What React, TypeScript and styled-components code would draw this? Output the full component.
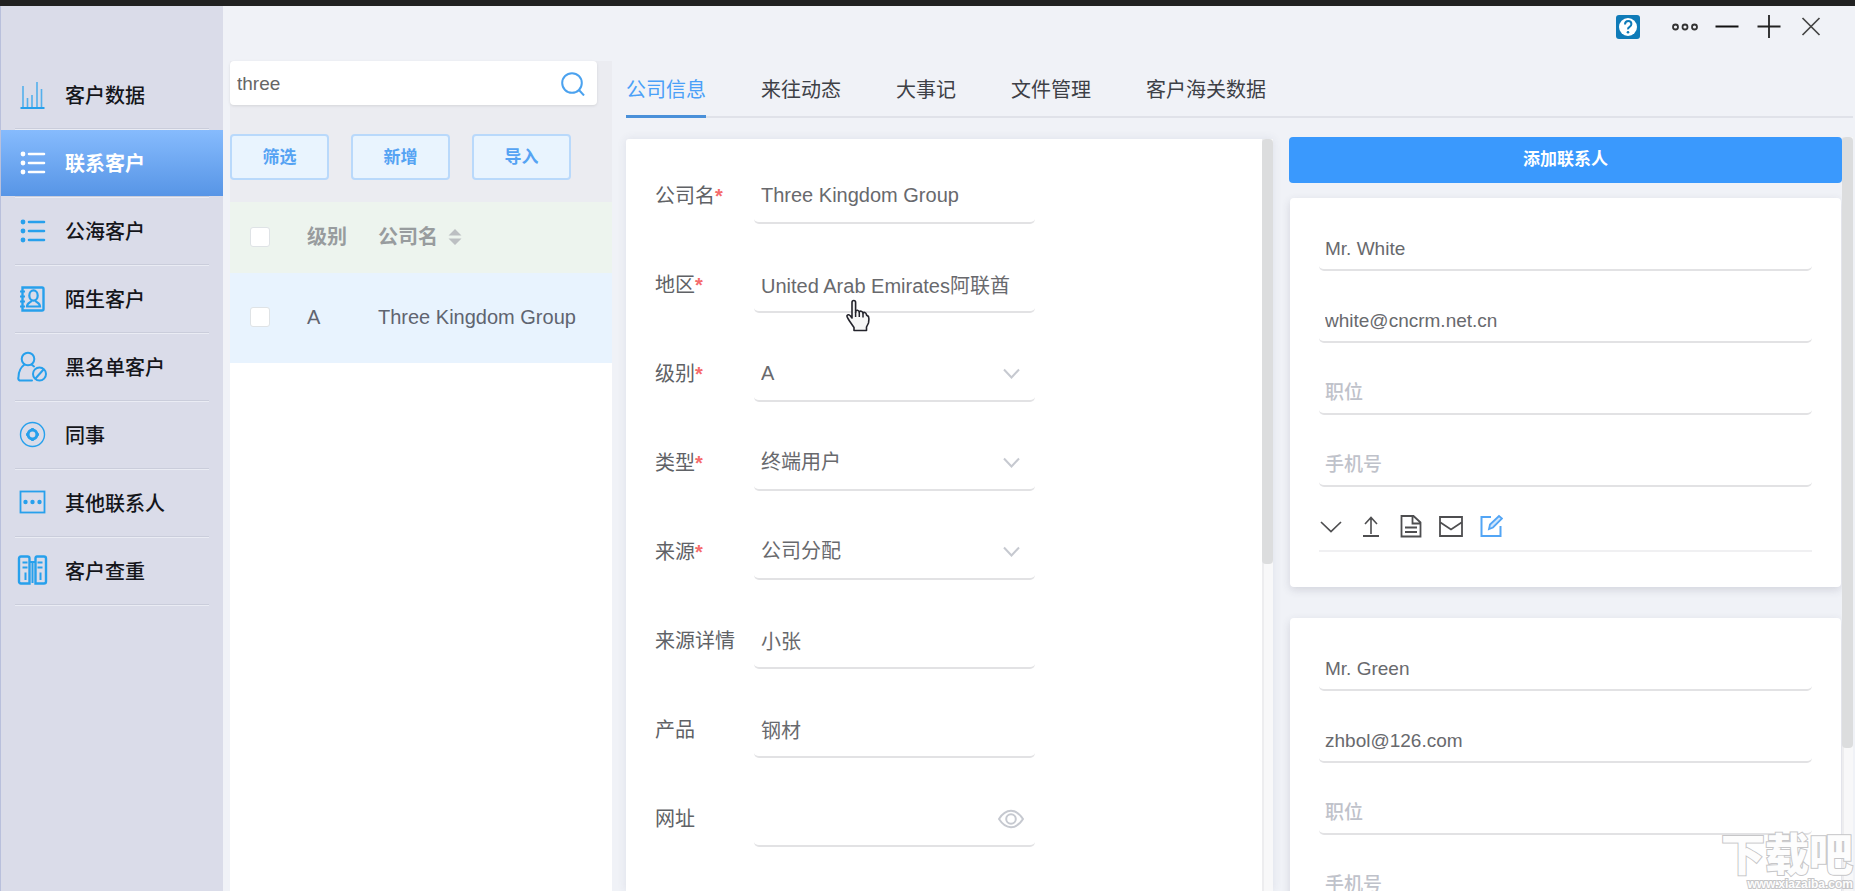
import React from "react";
import styled, { createGlobalStyle, css } from "styled-components";

const GlobalStyle = createGlobalStyle`
  *, *::before, *::after { box-sizing: border-box; }
  html, body { margin: 0; padding: 0; }
  body, input, select, button {
    font-family: "Liberation Sans", "Noto Sans CJK SC", sans-serif;
  }
  body { background: #f0f2f7; overflow: hidden; }
`;

const Page = styled.div`
  display: flex;
  flex-direction: column;
  height: 100vh;
  overflow: hidden;
  position: relative;
`;

const TitleStrip = styled.div`
  flex: none;
  height: 6px;
  background: #212121;
`;

const Shell = styled.div`
  flex: 1;
  min-height: 0;
  display: flex;
`;

/* ---------- Sidebar ---------- */

const Sidebar = styled.nav`
  flex: none;
  width: 223px;
  padding-top: 56px;
  background: #dadce9;
  border-left: 1px solid #b9c0dc;
`;

const NavList = styled.ul`
  list-style: none;
  margin: 0;
  padding: 0;
`;

const NavItem = styled.li`
  &::after {
    content: "";
    display: block;
    height: 2px;
    margin: 0 14px;
    background: linear-gradient(#cacddb 50%, #eaecf4 50%);
  }
`;

const NavLink = styled.a<{ $active?: boolean }>`
  display: flex;
  align-items: center;
  gap: 17px;
  height: 66px;
  padding-left: 15px;
  color: #14151a;
  font-size: 20px;
  font-weight: 500;
  line-height: 28px;
  text-decoration: none;
  ${(p) =>
    p.$active &&
    css`
      color: #fff;
      font-weight: 700;
      background: linear-gradient(#86bbfd, #5795e6);
    `}
`;

const NavIcon = styled.svg`
  flex: none;
  width: 32px;
  height: 32px;
  fill: none;
  stroke: currentColor;
  color: #27a0ec;
  stroke-width: 2;

  ${NavLink}[aria-current] & {
    color: #fff;
  }
`;

const NavLabel = styled.span`
  padding-top: 2px;
`;

/* ---------- Main area ---------- */

const Main = styled.main`
  flex: 1;
  min-width: 0;
  display: flex;
  flex-direction: column;
`;

const WindowBar = styled.header`
  flex: none;
  display: flex;
  justify-content: flex-end;
  align-items: center;
  height: 42px;
  gap: 14px;
  padding-right: 30px;
`;

const WindowButton = styled.button<{ $lead?: boolean }>`
  display: flex;
  padding: 0;
  border: 0;
  background: none;
  margin-right: ${(p) => (p.$lead ? "16px" : "0")};
`;

const Workspace = styled.div`
  flex: 1;
  min-height: 0;
  display: flex;
  gap: 14px;
  padding: 13px 0 0 7px;
`;

/* ---------- Customer list ---------- */

const ListPane = styled.section`
  flex: none;
  width: 382px;
  display: flex;
  flex-direction: column;
  background: #ebecf1;
`;

const SearchBox = styled.div`
  display: flex;
  align-items: center;
  height: 44px;
  width: 367px;
  padding-right: 11px;
  border-radius: 4px;
  background: #fff;
  box-shadow: 0 1px 3px rgba(0, 0, 0, 0.1);
`;

const SearchInput = styled.input`
  flex: 1;
  min-width: 0;
  height: 44px;
  padding: 2px 7px 0;
  border: 0;
  outline: 0;
  background: none;
  color: #666;
  font-size: 19px;
`;

const ButtonRow = styled.div`
  display: flex;
  gap: 22px;
  padding: 29px 0 22px;
`;

const OutlineButton = styled.button`
  width: 99px;
  height: 46px;
  padding: 1px 0 0;
  border: 2px solid #b9d9fb;
  border-radius: 4px;
  background: #e9f4fe;
  color: #55a3f3;
  font-size: 17px;
  font-weight: 700;
  line-height: 24px;
`;

const TableArea = styled.div`
  flex: 1;
  background: #fff;
`;

const Table = styled.table`
  width: 100%;
  border-collapse: collapse;
  table-layout: fixed;
  font-size: 20px;
  line-height: 28px;
`;

const HeadCell = styled.th<{ $w?: number }>`
  width: ${(p) => (p.$w ? `${p.$w}px` : "auto")};
  height: 71px;
  padding: 0 0 2px;
  text-align: left;
  font-weight: 700;
  color: #989c9e;
  background: #edf4ee;
`;

const Cell = styled.td`
  height: 90px;
  padding: 0 0 3px;
  color: #5f6470;
  background: #e8f3fe;
`;

const HeadSort = styled.button`
  display: flex;
  align-items: center;
  gap: 10px;
  padding: 0;
  border: 0;
  background: none;
  color: inherit;
  font: inherit;
`;

const Check = styled.input`
  appearance: none;
  display: block;
  width: 20px;
  height: 20px;
  margin: 0 0 0 20px;
  border: 1px solid #dfe3e6;
  border-radius: 3px;
  background: #fff;
`;

/* ---------- Detail ---------- */

const Detail = styled.section`
  flex: 1;
  min-width: 0;
  display: flex;
  flex-direction: column;
  padding-right: 2px;
`;

const Tabs = styled.div`
  flex: none;
  display: flex;
  gap: 55px;
  height: 57px;
  box-shadow: inset 0 -2px #e0e2e9;
`;

const Tab = styled.button<{ $active?: boolean }>`
  height: 57px;
  padding: 0;
  border: 0;
  border-top: 3px solid transparent;
  border-bottom: 3px solid ${(p) => (p.$active ? "#4a90d9" : "transparent")};
  background: none;
  color: ${(p) => (p.$active ? "#4aa0f8" : "#3d4046")};
  font-size: 20px;
  line-height: 28px;
`;

const Columns = styled.div`
  flex: 1;
  min-height: 0;
  display: flex;
  gap: 16px;
  padding-top: 21px;
`;

const FormPane = styled.div`
  flex: 647;
  min-width: 0;
  display: flex;
  background: #fff;
  border-radius: 3px 0 0 0;
  overflow: hidden;
  box-shadow: 0 0 10px rgba(60, 70, 110, 0.1);
`;

const Form = styled.form`
  flex: 1;
  min-width: 0;
  padding-left: 29px;
`;

const ScrollTrack = styled.div`
  flex: none;
  width: 11px;
  background: #f8f8f9;
  border-left: 2px solid #ededef;
`;

const ScrollThumb = styled.div<{ $size: number }>`
  height: ${(p) => p.$size}%;
  margin-left: -2px;
  background: #dcddde;
  border-radius: 4px;
`;

const FieldRow = styled.div`
  display: flex;
  align-items: flex-end;
  height: 89px;
  padding-top: 30px;
  &:first-child {
    height: 85px;
  }
`;

const FieldLabel = styled.label`
  flex: none;
  width: 99px;
  height: 57px;
  color: #606266;
  font-size: 20px;
  line-height: 58px;
`;

const Star = styled.span`
  color: #f56c6c;
  font-weight: 700;
`;

const FieldBox = styled.div`
  position: relative;
  width: 281px;
`;

const lineControl = css`
  display: block;
  width: 100%;
  border: 0;
  border-bottom: 2px solid #e2e2e4;
  border-radius: 5px;
  outline: 0;
  background: none;
  color: #68696d;
`;

const FieldInput = styled.input`
  ${lineControl}
  height: 57px;
  padding: 1px 7px 0;
  font-size: 20px;
`;

const FieldSelect = styled.select`
  ${lineControl}
  appearance: none;
  height: 57px;
  padding: 1px 7px 0;
  font-size: 20px;
`;

const FieldIcon = styled.svg`
  position: absolute;
  right: 11px;
  top: 19px;
  width: 26px;
  height: 20px;
  fill: none;
  stroke: #c6c9d0;
  stroke-width: 2;
  pointer-events: none;
`;

const HandPointer = styled.svg`
  position: absolute;
  left: 91px;
  top: 43px;
  width: 26px;
  height: 34px;
  z-index: 1;
  pointer-events: none;
`;

/* ---------- Contacts ---------- */

const ContactPane = styled.div`
  flex: 564;
  min-width: 0;
  display: flex;
  margin-top: -2px;
`;

const ContactList = styled.div`
  flex: 1;
  min-width: 0;
  display: flex;
  flex-direction: column;
`;

const AddButton = styled.button`
  flex: none;
  height: 46px;
  margin-bottom: 15px;
  padding: 0;
  border: 0;
  border-radius: 4px;
  background: #3a99fd;
  color: #fff;
  font-size: 17px;
  font-weight: 700;
  line-height: 24px;
`;

const Card = styled.article`
  flex: none;
  margin: 0 1px 31px;
  padding: 1px 29px 35px;
  border-radius: 4px;
  background: #fff;
  box-shadow: 0 3px 8px rgba(60, 60, 90, 0.16);
`;

const ContactInput = styled.input`
  ${lineControl}
  height: 72px;
  padding: 30px 6px 0;
  font-size: 19px;
  &::placeholder {
    color: #bfc2ca;
    font-weight: 500;
    opacity: 1;
  }
`;

const Actions = styled.div`
  display: flex;
  align-items: center;
  gap: 16px;
  height: 65px;
  padding-top: 15px;
  border-bottom: 2px solid #f0f0f2;
`;

const ActionButton = styled.button<{ $accent?: boolean }>`
  display: flex;
  padding: 0;
  border: 0;
  background: none;
  color: ${(p) => (p.$accent ? "#52a5f5" : "#4e4e50")};
  svg {
    width: 24px;
    height: 24px;
    fill: none;
    stroke: currentColor;
    stroke-width: 2;
  }
`;

/* ---------- Site mark ---------- */

const SiteMark = styled.div`
  position: absolute;
  right: 2px;
  bottom: 0;
  display: flex;
  flex-direction: column;
  align-items: flex-end;
  color: #fdfdfd;
  -webkit-text-stroke: 2px #c6c6c8;
  paint-order: stroke fill;
  font-weight: 900;
  pointer-events: none;
`;

const MarkName = styled.span`
  font-size: 44px;
  line-height: 44px;
`;

const MarkSite = styled.span`
  font-size: 12px;
  line-height: 13px;
`;

/* ---------- Data ---------- */

const dots = (
  <g>
    <g fill="currentColor" stroke="none">
      <circle cx="7" cy="7" r="2.4" />
      <circle cx="7" cy="16" r="2.4" />
      <circle cx="7" cy="25" r="2.4" />
    </g>
    <path d="M13 7h15M13 16h15M13 25h15" strokeWidth="2.6" strokeLinecap="round" />
  </g>
);

const navItems = [
  {
    label: "客户数据",
    icon: (
      <g strokeWidth="1.6">
        <path d="M7 7v21M11.500 19v9M16 16v12M21 3v25M25.500 10v18" opacity="0.75" />
        <path d="M4.500 29h24" strokeWidth="2" />
      </g>
    ),
  },
  { label: "联系客户", icon: dots, active: true },
  { label: "公海客户", icon: dots },
  {
    label: "陌生客户",
    icon: (
      <g>
        <path d="M6.500 4.500H26a1.500 1.500 0 0 1 1.500 1.500V26a1.500 1.500 0 0 1-1.500 1.500H6.500z" strokeWidth="2.4" />
        <path d="M4 8.500h5M4 13.500h5M4 18.500h5M4 23.500h5" strokeWidth="2" />
        <ellipse cx="17.500" cy="12.500" rx="4.200" ry="5.200" strokeWidth="2.2" />
        <path d="M15.500 17.500c0 2-4.500 2-4.500 6h13c0-4-4.500-4-4.500-6" strokeWidth="2.2" />
      </g>
    ),
  },
  {
    label: "黑名单客户",
    icon: (
      <g>
        <circle cx="12" cy="8" r="6.300" />
        <path d="M8.500 13.500C4.500 16.500 2.500 21 2.500 26a3 3 0 0 0 1 3.500H16M15.500 13.500l2.500 2" strokeLinecap="round" />
        <circle cx="23.500" cy="23" r="6.500" />
        <path d="M19.500 27.500l8-9" />
      </g>
    ),
  },
  {
    label: "同事",
    icon: (
      <g>
        <circle cx="16.500" cy="15.500" r="12" strokeWidth="1.400" />
        <circle cx="16.500" cy="15.500" r="4.400" strokeWidth="3" />
        <path d="M16.500 9v3M16.500 19v3M10 15.500h3M20 15.500h3" strokeWidth="2.600" />
      </g>
    ),
  },
  {
    label: "其他联系人",
    icon: (
      <g>
        <rect x="4.500" y="4.500" width="24" height="21" strokeWidth="1.800" />
        <g fill="currentColor" stroke="none">
          <circle cx="9.500" cy="15" r="2.200" />
          <circle cx="16.500" cy="15" r="2.200" />
          <circle cx="23.500" cy="15" r="2.200" />
        </g>
      </g>
    ),
  },
  {
    label: "客户查重",
    icon: (
      <g strokeWidth="2.400">
        <path d="M5 1.500h6.500q2 0 2 2v25H5q-2 0-2-2V3.500q0-2 2-2zM21 1.500h7q2 0 2 2v23q0 2-2 2h-8.500v-25q0-2 1.500-2z" />
        <path d="M14 7h5M6.500 7.500h5M6.500 12.500h5M21.500 7.500h5M21.500 12.500h5M9.500 17.500V25M24.500 17.500V25M16.500 8v20" strokeWidth="2" />
      </g>
    ),
  },
];

const tabs = ["公司信息", "来往动态", "大事记", "文件管理", "客户海关数据"];

type Field = { id: string; label: string; value: string; required?: boolean; kind?: "select" | "web"; pointer?: boolean };

const fields: Field[] = [
  { id: "name", label: "公司名", value: "Three Kingdom Group", required: true },
  { id: "region", label: "地区", value: "United Arab Emirates阿联酋", required: true, pointer: true },
  { id: "level", label: "级别", value: "A", required: true, kind: "select" },
  { id: "type", label: "类型", value: "终端用户", required: true, kind: "select" },
  { id: "source", label: "来源", value: "公司分配", required: true, kind: "select" },
  { id: "source-detail", label: "来源详情", value: "小张" },
  { id: "product", label: "产品", value: "钢材" },
  { id: "website", label: "网址", value: "", kind: "web" },
];

const contacts = [
  { name: "Mr. White", email: "white@cncrm.net.cn" },
  { name: "Mr. Green", email: "zhbol@126.com" },
];

/* ---------- Parts ---------- */

function FieldLine({ field }: { field: Field }) {
  return (
    <FieldRow>
      <FieldLabel htmlFor={field.id}>
        {field.label}
        {field.required && <Star>*</Star>}
      </FieldLabel>
      <FieldBox>
        {field.kind === "select" ? (
          <>
            <FieldSelect id={field.id} defaultValue={field.value}>
              <option>{field.value}</option>
            </FieldSelect>
            <FieldIcon viewBox="0 0 26 20">
              <path d="M6 5.500l7.500 8 7.500-8" />
            </FieldIcon>
          </>
        ) : (
          <FieldInput id={field.id} defaultValue={field.value} />
        )}
        {field.kind === "web" && (
          <FieldIcon viewBox="0 0 26 20">
            <path d="M1 10C4.500 4.500 8.500 1.800 13 1.800S21.500 4.500 25 10c-3.500 5.500-7.500 8.200-12 8.200S4.500 15.500 1 10z" />
            <circle cx="13" cy="10" r="4.800" />
          </FieldIcon>
        )}
        {field.pointer && (
          <HandPointer viewBox="0 0 26 34">
            <path
              d="M7 3.500Q7 1.500 8.800 1.500T10.600 3.500V13.500Q10.800 11 12.500 11.200T14.300 13.500Q14.500 11.800 16.200 12.200T18 14.500Q18.200 13 19.800 13.500T21.500 16L23.500 17.500Q24.500 20 23.500 24L21.500 28V31.500H9V28.500L4.500 22Q1.500 17.500 2 16.500Q3.500 14.800 5.500 17L7 19z"
              fill="#f6f6f6"
              stroke="#23232b"
              strokeWidth="1.600"
              strokeLinejoin="round"
            />
            <path d="M10.600 13v5M14.300 13.500v4.500M18 14.500v4" stroke="#23232b" strokeWidth="1.500" fill="none" />
          </HandPointer>
        )}
      </FieldBox>
    </FieldRow>
  );
}

function ContactCard({ name, email }: { name: string; email: string }) {
  return (
    <Card>
      <ContactInput aria-label="姓名" defaultValue={name} />
      <ContactInput aria-label="邮箱" defaultValue={email} />
      <ContactInput aria-label="职位" placeholder="职位" />
      <ContactInput aria-label="手机号" placeholder="手机号" />
      <Actions>
        <ActionButton type="button" aria-label="展开">
          <svg viewBox="0 0 24 24"><path d="M2 8l10 9.500L22 8" strokeWidth="1.700" /></svg>
        </ActionButton>
        <ActionButton type="button" aria-label="上传">
          <svg viewBox="0 0 24 24"><path d="M12 20V4M6 10l6-6.500 6 6.500" strokeWidth="1.600" /><path d="M4 22h16" /></svg>
        </ActionButton>
        <ActionButton type="button" aria-label="文档">
          <svg viewBox="0 0 24 24"><path d="M2.500 2h12l7 6.500V22.500h-19zM13.500 2v7.500h8M6 13.500h12M6 18h12" strokeWidth="1.800" /></svg>
        </ActionButton>
        <ActionButton type="button" aria-label="邮件">
          <svg viewBox="0 0 24 24"><path d="M1 3h22v19H1zM1.500 8.500L12 15.500l10.500-7" strokeWidth="1.800" /></svg>
        </ActionButton>
        <ActionButton type="button" aria-label="编辑" $accent>
          <svg viewBox="0 0 24 24"><path d="M12 3H2.500v19h19V12" /><path d="M10 15l1-4.500L20 2l3 2.500-9 9z" strokeWidth="1.800" fill="#cfe5fc" /></svg>
        </ActionButton>
      </Actions>
    </Card>
  );
}

export default function App() {
  return (
    <Page>
      <GlobalStyle />
      <TitleStrip />
      <Shell>
        <Sidebar>
          <NavList>
            {navItems.map((item) => (
              <NavItem key={item.label}>
                <NavLink href="#" $active={item.active} aria-current={item.active ? "page" : undefined}>
                  <NavIcon viewBox="0 0 32 32">{item.icon}</NavIcon>
                  <NavLabel>{item.label}</NavLabel>
                </NavLink>
              </NavItem>
            ))}
          </NavList>
        </Sidebar>
        <Main>
          <WindowBar>
            <WindowButton type="button" aria-label="帮助" $lead>
              <svg width="26" height="26" viewBox="0 0 26 26">
                <rect x="1" y="1" width="24" height="24" rx="3" fill="#0f7bb8" />
                <circle cx="13" cy="13" r="9" fill="#fff" />
                <path d="M10 10.500q0-3.500 3.200-3.500t3.200 3q0 1.800-1.800 2.800t-1.600 2.500" fill="none" stroke="#0f7bb8" strokeWidth="2" />
                <circle cx="13" cy="18.300" r="1.300" fill="#0f7bb8" />
              </svg>
            </WindowButton>
            <WindowButton type="button" aria-label="更多">
              <svg width="28" height="26" viewBox="0 0 28 26" fill="none" stroke="#333" strokeWidth="1.800">
                <circle cx="4.500" cy="13" r="2.500" />
                <circle cx="14" cy="13" r="2.500" />
                <circle cx="23.500" cy="13" r="2.500" />
              </svg>
            </WindowButton>
            <WindowButton type="button" aria-label="最小化">
              <svg width="28" height="26" viewBox="0 0 28 26" stroke="#111" strokeWidth="2">
                <path d="M2.500 12.500h23" />
              </svg>
            </WindowButton>
            <WindowButton type="button" aria-label="最大化">
              <svg width="28" height="26" viewBox="0 0 28 26" stroke="#222" strokeWidth="1.800">
                <path d="M2.500 12.500h23M14 1v23" />
              </svg>
            </WindowButton>
            <WindowButton type="button" aria-label="关闭">
              <svg width="28" height="26" viewBox="0 0 28 26" stroke="#444" strokeWidth="1.700">
                <path d="M5.500 4l17 17M22.500 4l-17 17" />
              </svg>
            </WindowButton>
          </WindowBar>
          <Workspace>
            <ListPane>
              <SearchBox>
                <SearchInput aria-label="搜索" defaultValue="three" />
                <svg width="26" height="26" viewBox="0 0 26 26" fill="none" stroke="#4ba2ef" strokeWidth="2">
                  <circle cx="12" cy="13" r="9.800" />
                  <path d="M18.500 19.500l5.500 6" />
                </svg>
              </SearchBox>
              <ButtonRow>
                <OutlineButton type="button">筛选</OutlineButton>
                <OutlineButton type="button">新增</OutlineButton>
                <OutlineButton type="button">导入</OutlineButton>
              </ButtonRow>
              <TableArea>
                <Table>
                  <thead>
                    <tr>
                      <HeadCell $w={77}><Check type="checkbox" aria-label="全选" /></HeadCell>
                      <HeadCell $w={71}>级别</HeadCell>
                      <HeadCell>
                        <HeadSort type="button">
                          公司名
                          <svg width="14" height="18" viewBox="0 0 14 18" fill="#bcbfc2">
                            <path d="M7 1l6.500 6.500H.5zM7 17L.5 10.500h13z" />
                          </svg>
                        </HeadSort>
                      </HeadCell>
                    </tr>
                  </thead>
                  <tbody>
                    <tr>
                      <Cell><Check type="checkbox" aria-label="选择 Three Kingdom Group" /></Cell>
                      <Cell>A</Cell>
                      <Cell>Three Kingdom Group</Cell>
                    </tr>
                  </tbody>
                </Table>
              </TableArea>
            </ListPane>
            <Detail>
              <Tabs role="tablist">
                {tabs.map((t, i) => (
                  <Tab key={t} type="button" role="tab" aria-selected={i === 0} $active={i === 0}>
                    {t}
                  </Tab>
                ))}
              </Tabs>
              <Columns>
                <FormPane>
                  <Form>
                    {fields.map((f) => (
                      <FieldLine key={f.id} field={f} />
                    ))}
                  </Form>
                  <ScrollTrack>
                    <ScrollThumb $size={56.5} />
                  </ScrollTrack>
                </FormPane>
                <ContactPane>
                  <ContactList>
                    <AddButton type="button">添加联系人</AddButton>
                    {contacts.map((c) => (
                      <ContactCard key={c.email} {...c} />
                    ))}
                  </ContactList>
                  <ScrollTrack>
                    <ScrollThumb $size={81} />
                  </ScrollTrack>
                </ContactPane>
              </Columns>
            </Detail>
          </Workspace>
        </Main>
      </Shell>
      <SiteMark>
        <MarkName>下载吧</MarkName>
        <MarkSite>www.xiazaiba.com</MarkSite>
      </SiteMark>
    </Page>
  );
}
